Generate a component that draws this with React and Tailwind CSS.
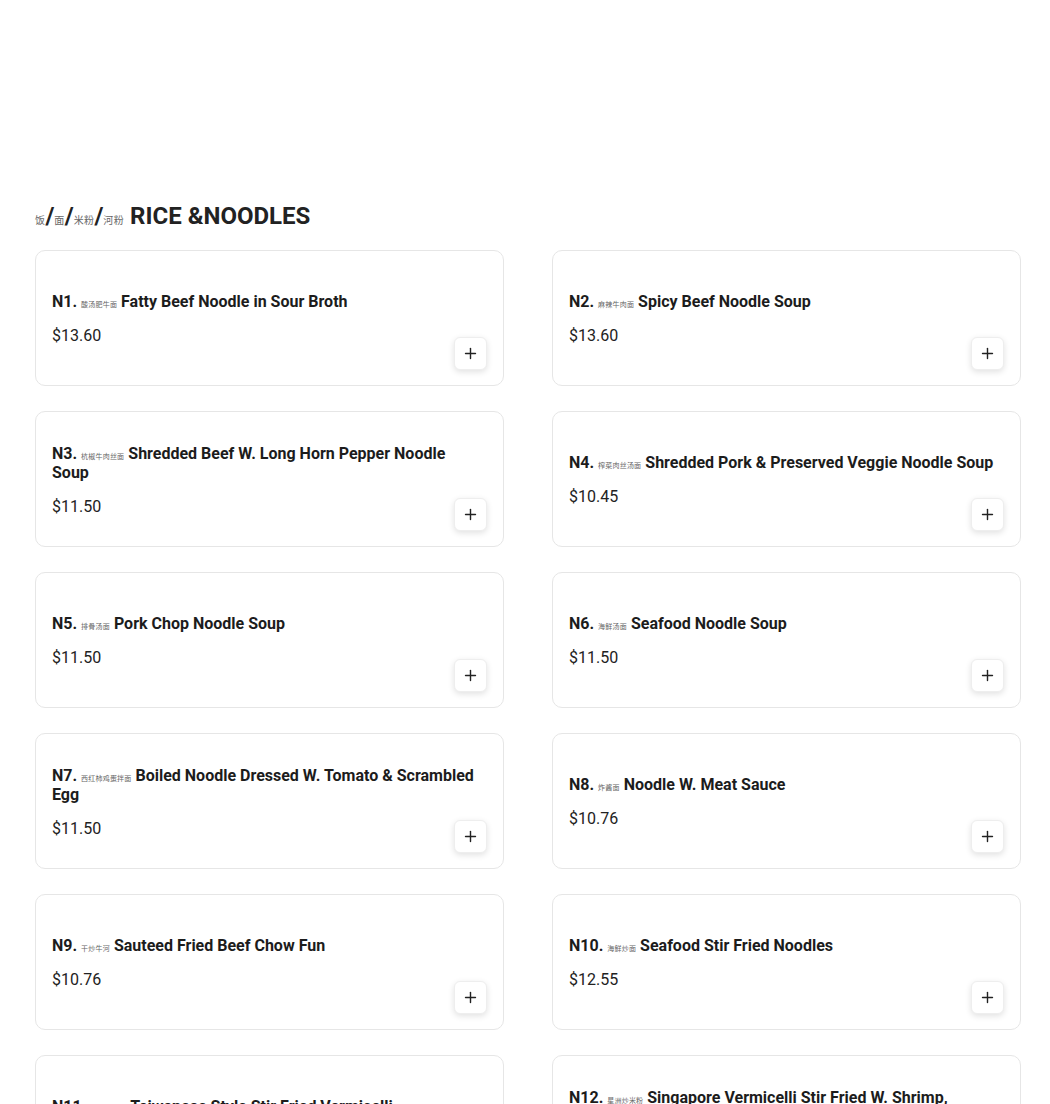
import React from "react";
import { Plus } from "lucide-react";

const items = [
  { code: "N1.", zh: "酸汤肥牛面", en: "Fatty Beef Noodle in Sour Broth", price: "$13.60" },
  { code: "N2.", zh: "麻辣牛肉面", en: "Spicy Beef Noodle Soup", price: "$13.60" },
  { code: "N3.", zh: "杭椒牛肉丝面", en: "Shredded Beef W. Long Horn Pepper Noodle Soup", price: "$11.50" },
  { code: "N4.", zh: "榨菜肉丝汤面", en: "Shredded Pork & Preserved Veggie Noodle Soup", price: "$10.45" },
  { code: "N5.", zh: "排骨汤面", en: "Pork Chop Noodle Soup", price: "$11.50" },
  { code: "N6.", zh: "海鲜汤面", en: "Seafood Noodle Soup", price: "$11.50" },
  { code: "N7.", zh: "西红柿鸡蛋拌面", en: "Boiled Noodle Dressed W. Tomato & Scrambled Egg", price: "$11.50" },
  { code: "N8.", zh: "炸酱面", en: "Noodle W. Meat Sauce", price: "$10.76" },
  { code: "N9.", zh: "干炒牛河", en: "Sauteed Fried Beef Chow Fun", price: "$10.76" },
  { code: "N10.", zh: "海鲜炒面", en: "Seafood Stir Fried Noodles", price: "$12.55" },
  { code: "N11.", zh: "台式炒米粉", en: "Taiwanese Style Stir Fried Vermicelli", price: "$10.76" },
  { code: "N12.", zh: "星洲炒米粉", en: "Singapore Vermicelli Stir Fried W. Shrimp, Chicken & Egg", price: "$12.55" },
];

function Zh({ children, big }) {
  return (
    <span
      className={
        big
          ? "font-['Noto_Sans_CJK_SC',sans-serif] font-normal text-[10px] leading-none tracking-[0.4px] text-[#666]"
          : "font-['Noto_Sans_CJK_SC',sans-serif] font-normal text-[7px] leading-none tracking-[0.2px] text-[#666]"
      }
    >
      {children}
    </span>
  );
}

function Card({ item }) {
  return (
    <div className="grid h-[136px] rounded-[10px] border border-[#e6e6e6] bg-white p-4">
      <div className="col-start-1 row-start-1 self-center pt-1 pr-[6px]">
        <div className="text-[16px] font-bold leading-[19px] text-[#1c1c1c]">
          {item.code} <Zh>{item.zh}</Zh> {item.en}
        </div>
        <div className="mt-[13px] text-[16px] leading-6 text-[#222]">{item.price}</div>
      </div>
      <button className="col-start-1 row-start-1 -mb-px flex h-[33px] w-[33px] items-center justify-center self-end justify-self-end rounded-md border border-[#eeeeee] bg-white shadow-[0_2px_6px_rgba(0,0,0,0.12)]">
        <Plus size={17} strokeWidth={2} color="#222" />
      </button>
    </div>
  );
}

export default function App() {
  return (
    <div className="min-h-screen bg-white pl-[35px] pr-[29px] pt-[200px] font-['Roboto','Noto_Sans_CJK_SC',sans-serif]">
      <h2 className="mb-[18px] h-8 text-[24px] font-bold leading-8 text-[#222]">
        <Zh big>饭</Zh>/<Zh big>面</Zh>/<Zh big>米粉</Zh>/<Zh big>河粉</Zh> RICE &amp;NOODLES
      </h2>
      <div className="grid grid-cols-2 gap-x-[48px] gap-y-[25px] pb-10">
        {items.map((it) => (
          <Card key={it.code} item={it} />
        ))}
      </div>
    </div>
  );
}
